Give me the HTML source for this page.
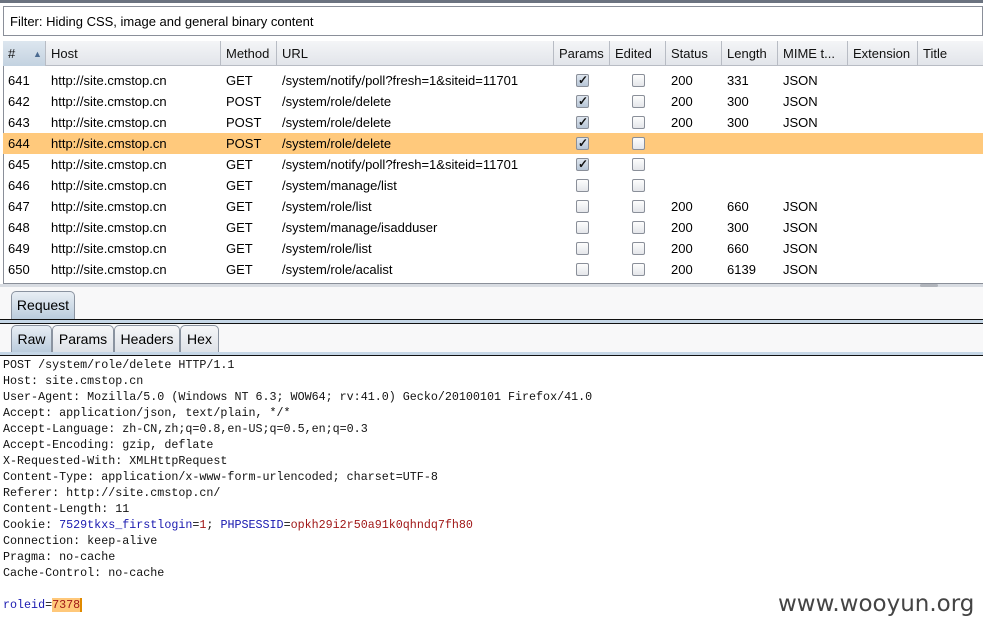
<!DOCTYPE html><html><head><style>
*{margin:0;padding:0;box-sizing:border-box}
body{width:983px;height:636px;background:#fff;font-family:"Liberation Sans",sans-serif;font-size:13px;color:#000;position:relative;overflow:hidden}
.abs{position:absolute}
.hdr div,.row div{position:absolute;top:0;padding-left:5px;white-space:nowrap}
.hdr{position:absolute;left:3px;top:41px;width:980px;height:25px;background:linear-gradient(#f4f5f7,#e2e5ea);border-bottom:1px solid #b8bcc4}
.hdr div{height:25px;line-height:26px;border-right:1px solid #b8bcc4;color:#111}
.row{position:absolute;left:3px;width:980px;height:21px;line-height:21px}
.cb{position:absolute;top:4px;width:13px;height:13px;border:1px solid #8a8f99;border-radius:2px;background:linear-gradient(#fdfdfd,#e4e6ea)}
.cb.on{background:linear-gradient(#dfe6ef,#b7c5d6)}
.cb.on:after{content:"✓";position:absolute;left:1px;top:-5px;font-size:12px;font-weight:bold;color:#111}
.tab{position:absolute;height:28px;border:1px solid #8a93a0;border-bottom:none;border-radius:5px 5px 0 0;background:linear-gradient(#f5f6f8,#dde1e7);line-height:26px;text-align:center;font-size:14px}
.tab.sel{background:linear-gradient(#e8eef4,#b9cbdc)}
pre{position:absolute;left:3px;top:357px;font-family:"Liberation Mono",monospace;font-size:11.7px;line-height:16px;color:#111}
.b{color:#1a1ab0}.r{color:#a01818}
</style></head><body>
<div class="abs" style="left:0;top:0;width:983px;height:3px;background:#6b7380"></div>
<div class="abs" style="left:3px;top:6px;width:980px;height:30px;border:1px solid #8a8f99;background:#fff;line-height:29px;padding-left:6px;font-size:13px">Filter: Hiding CSS, image and general binary content</div>
<div class="abs" style="left:3px;top:41px;width:980px;height:243px;border:1px solid #8a8f99;border-right:none"></div>
<div class="hdr">
<div style="left:0;width:43px;background:linear-gradient(#dde6ef,#c3d2e0)">#<span style="position:absolute;left:30px;font-size:9px;color:#4a6a90">▲</span></div>
<div style="left:43px;width:175px">Host</div>
<div style="left:218px;width:56px">Method</div>
<div style="left:274px;width:277px">URL</div>
<div style="left:551px;width:56px">Params</div>
<div style="left:607px;width:56px">Edited</div>
<div style="left:663px;width:56px">Status</div>
<div style="left:719px;width:56px">Length</div>
<div style="left:775px;width:70px">MIME t...</div>
<div style="left:845px;width:70px">Extension</div>
<div style="left:915px;width:70px;border:none">Title</div>
</div>
<div id="rows"></div>
<div class="abs" style="left:0;top:284px;width:983px;height:3px;background:#d8dce2"></div>
<div class="abs" style="left:920px;top:284px;width:18px;height:3px;background:#b0b4bb;border-radius:2px"></div>
<div class="abs" style="left:0;top:287px;width:983px;height:33px;background:#f8f8f9"></div>
<div class="tab sel" style="left:11px;top:291px;width:64px;height:29px">Request</div>
<div class="abs" style="left:0;top:319px;width:983px;height:5px;background:#c5d6e6;border-top:1px solid #111;border-bottom:1px solid #111"></div>
<div class="abs" style="left:0;top:324px;width:983px;height:30px;background:#f8f8f9"></div>
<div class="tab sel" style="left:11px;top:325px;width:41px">Raw</div>
<div class="tab" style="left:52px;top:325px;width:62px">Params</div>
<div class="tab" style="left:114px;top:325px;width:66px">Headers</div>
<div class="tab" style="left:180px;top:325px;width:39px">Hex</div>
<div class="abs" style="left:0;top:352px;width:983px;height:4px;background:#c5d6e6;border-bottom:1px solid #111"></div>
<pre>POST /system/role/delete HTTP/1.1
Host: site.cmstop.cn
User-Agent: Mozilla/5.0 (Windows NT 6.3; WOW64; rv:41.0) Gecko/20100101 Firefox/41.0
Accept: application/json, text/plain, */*
Accept-Language: zh-CN,zh;q=0.8,en-US;q=0.5,en;q=0.3
Accept-Encoding: gzip, deflate
X-Requested-With: XMLHttpRequest
Content-Type: application/x-www-form-urlencoded; charset=UTF-8
Referer: http://site.cmstop.cn/
Content-Length: 11
Cookie: <span class="b">7529tkxs_firstlogin</span>=<span class="r">1</span>; <span class="b">PHPSESSID</span>=<span class="r">opkh29i2r50a91k0qhndq7fh80</span>
Connection: keep-alive
Pragma: no-cache
Cache-Control: no-cache

<span class="b">roleid</span>=<span class="r" style="background:#ffc87a;border-right:2px solid #e08a00">7378</span></pre>
<div class="abs" style="left:778px;top:591px;font-family:'DejaVu Sans',sans-serif;font-size:23px;color:#444">www.wooyun.org</div>
<script>
var d=[[641,"GET","/system/notify/poll?fresh=1&siteid=11701",1,"200","331","JSON"],
[642,"POST","/system/role/delete",1,"200","300","JSON"],
[643,"POST","/system/role/delete",1,"200","300","JSON"],
[644,"POST","/system/role/delete",1,"","",""],
[645,"GET","/system/notify/poll?fresh=1&siteid=11701",1,"","",""],
[646,"GET","/system/manage/list",0,"","",""],
[647,"GET","/system/role/list",0,"200","660","JSON"],
[648,"GET","/system/manage/isadduser",0,"200","300","JSON"],
[649,"GET","/system/role/list",0,"200","660","JSON"],
[650,"GET","/system/role/acalist",0,"200","6139","JSON"]];
var h="";d.forEach(function(r,i){
h+='<div class="row" style="top:'+(70+i*21)+'px;'+(r[0]==644?'background:#ffc97c':'')+'">'+
'<div style="left:0">'+r[0]+'</div><div style="left:43px">http://site.cmstop.cn</div><div style="left:218px">'+r[1]+'</div><div style="left:274px">'+r[2].replace(/&/g,"&amp;")+'</div>'+
'<span class="cb'+(r[3]?' on':'')+'" style="left:573px"></span><span class="cb" style="left:629px"></span>'+
'<div style="left:663px">'+r[4]+'</div><div style="left:719px">'+r[5]+'</div><div style="left:775px">'+r[6]+'</div></div>';});
document.getElementById("rows").innerHTML=h;
</script>
</body></html>
